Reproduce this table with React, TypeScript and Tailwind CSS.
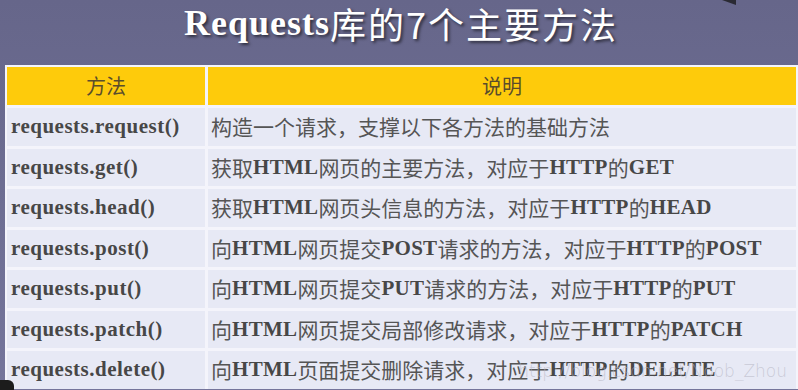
import React from "react";

interface Row {
  method: string;
  desc: string;
}

const rows: Row[] = [
  { method: "requests.request()", desc: "构造一个请求，支撑以下各方法的基础方法" },
  { method: "requests.get()", desc: "获取HTML网页的主要方法，对应于HTTP的GET" },
  { method: "requests.head()", desc: "获取HTML网页头信息的方法，对应于HTTP的HEAD" },
  { method: "requests.post()", desc: "向HTML网页提交POST请求的方法，对应于HTTP的POST" },
  { method: "requests.put()", desc: "向HTML网页提交PUT请求的方法，对应于HTTP的PUT" },
  { method: "requests.patch()", desc: "向HTML网页提交局部修改请求，对应于HTTP的PATCH" },
  { method: "requests.delete()", desc: "向HTML页面提交删除请求，对应于HTTP的DELETE" },
];

// 英文部分用粗体衬线，中文用普通黑体
const MixedText: React.FC<{ text: string }> = ({ text }) => {
  const parts = text.split(/([A-Za-z]+)/).filter((p) => p.length > 0);
  return (
    <>
      {parts.map((p, i) =>
        /^[A-Za-z]+$/.test(p) ? (
          <span
            key={i}
            className="font-bold text-[#474747] tracking-[0.3px] [font-family:'Liberation_Serif',serif]"
          >
            {p}
          </span>
        ) : (
          <span
            key={i}
            className="text-[#555555] [font-family:'Noto_Sans_CJK_SC',sans-serif]"
          >
            {p}
          </span>
        )
      )}
    </>
  );
};

export default function App() {
  return (
    <div className="relative w-[798px] h-[390px] overflow-hidden bg-gradient-to-b from-[#66668a] to-[#75759b]">
      {/* 标题 */}
      <div className="h-[65px] flex items-center justify-center pb-[20px] pl-[4px] text-white text-[36px] leading-[44px] [text-shadow:2px_2px_3px_rgba(0,0,0,0.55)]">
        <span className="font-bold tracking-[1px] [font-family:'Liberation_Serif',serif]">
          Requests
        </span>
        <span className="tracking-[2px] [font-family:'Noto_Sans_CJK_SC',sans-serif]">
          库的7个主要方法
        </span>
      </div>

      {/* 表格 */}
      <div className="ml-[5px] bg-[#f4f4fb] p-[2px] pb-0 flex flex-col gap-[3px]">
        <div className="h-[38px] flex gap-[3px]">
          <div className="w-[198px] bg-[#fecb0b] flex items-center justify-center text-[20px] text-[#5a4d2c] [font-family:'Noto_Sans_CJK_SC',sans-serif]">
            方法
          </div>
          <div className="flex-1 bg-[#fecb0b] flex items-center justify-center text-[20px] text-[#5a4d2c] [font-family:'Noto_Sans_CJK_SC',sans-serif]">
            说明
          </div>
        </div>
        {rows.map((r) => (
          <div key={r.method} className="h-[37.5px] flex gap-[3px]">
            <div className="w-[198px] bg-[#e7e9f5] flex items-center pl-[4px] text-[21px] font-bold text-[#474747] tracking-[0.5px] [font-family:'Liberation_Serif',serif]">
              {r.method}
            </div>
            <div className="flex-1 bg-[#e7e9f5] flex items-center pl-[3px] text-[21px] whitespace-nowrap">
              <MixedText text={r.desc} />
            </div>
          </div>
        ))}
      </div>

      {/* 水印 */}
      <div className="absolute right-[11px] top-[359px] text-[17px] text-[#b4b4c2]/60 [font-family:'DejaVu_Sans',sans-serif] font-light whitespace-nowrap">
        http://blog.csdn.net/Noob_Zhou
      </div>

      {/* 角落的暗色块 */}
      <div className="absolute left-[-6px] top-[380px] w-[20px] h-[20px] rounded-[6px] bg-[#1c1c1c]" />
      <div className="absolute left-[722px] top-0 w-0 h-0 border-l-[14px] border-l-transparent border-t-[5px] border-t-[#2a2a33]" />
    </div>
  );
}
